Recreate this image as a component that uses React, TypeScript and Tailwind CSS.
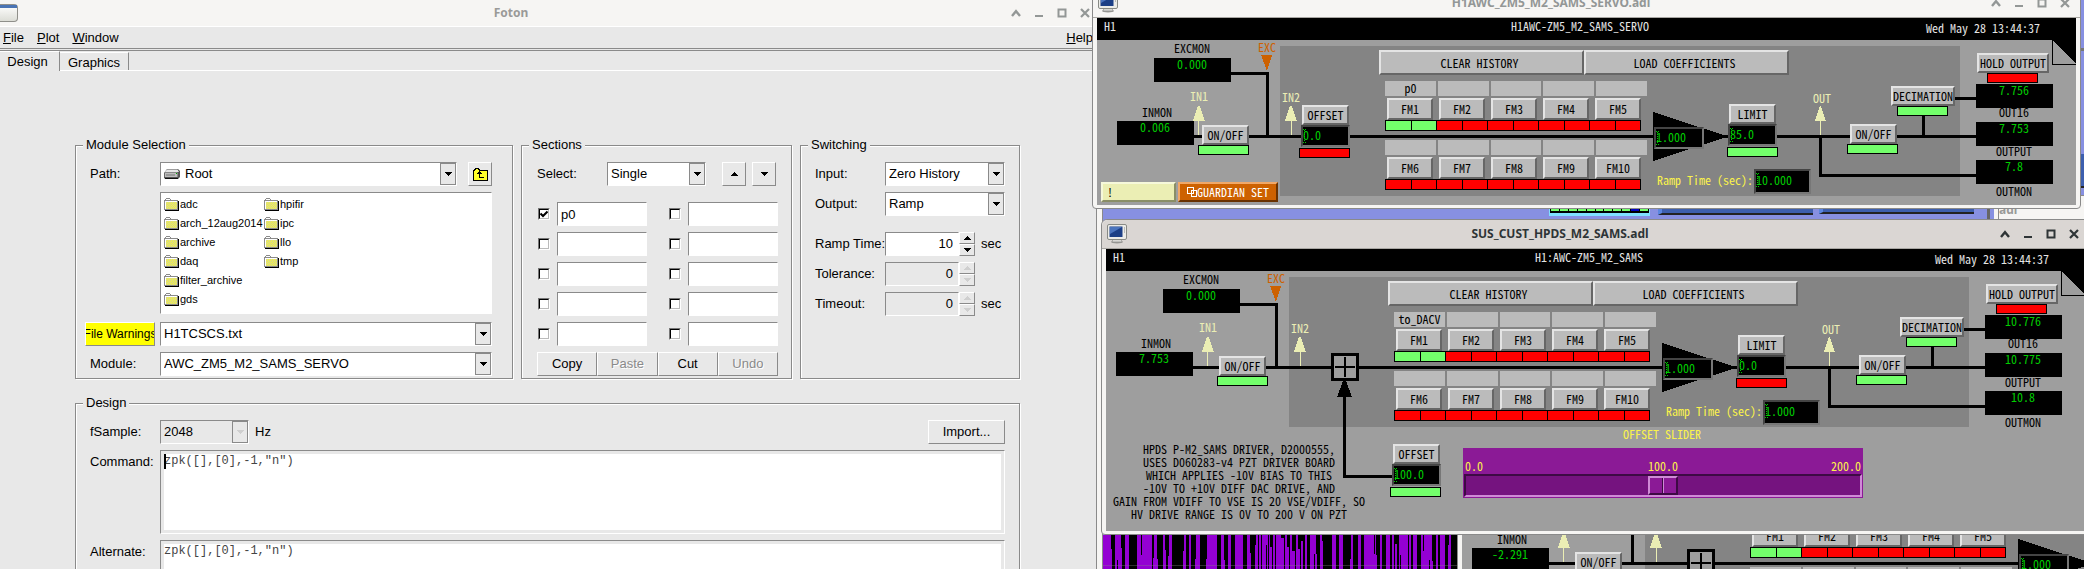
import type { ReactNode } from 'react';

/* ---------- shared pieces ---------- */

const SANS = "font-['Liberation_Sans',Arial,sans-serif]";
const MONO = "font-['Noto_Sans_Mono_CJK_SC','Liberation_Mono',monospace]";

function WindowControls() {
  const cls = 'flex h-4 w-[23px] items-center justify-center';
  return (
    <div className="flex shrink-0">
      <button className={cls} aria-label="Shade">
        <svg width="10" height="10" viewBox="0 0 10 10" fill="none" stroke="currentColor" strokeWidth="2.4"><path d="M1 8 5 3.2 9 8" /></svg>
      </button>
      <button className={cls} aria-label="Minimize">
        <svg width="10" height="10" viewBox="0 0 10 10" fill="currentColor"><path d="M1 7h8v2H1z" /></svg>
      </button>
      <button className={cls} aria-label="Maximize">
        <svg width="10" height="10" viewBox="0 0 10 10" fill="none" stroke="currentColor" strokeWidth="2"><path d="M1.500 1.500h7v7h-7z" /></svg>
      </button>
      <button className={cls} aria-label="Close">
        <svg width="10" height="10" viewBox="0 0 10 10" fill="none" stroke="currentColor" strokeWidth="2.2"><path d="M1 1 9 9M9 1 1 9" /></svg>
      </button>
    </div>
  );
}

function Triangle({ up = false, dim = false }: { up?: boolean; dim?: boolean }) {
  return (
    <svg width="8" height="4" viewBox="0 0 8 4" shapeRendering="crispEdges" fill={dim ? '#cfcfcf' : '#000'}>
      <path d={up ? 'M0 4 4 0 8 4z' : 'M0 0h8L4 4z'} />
    </svg>
  );
}

/* ---------- Foton form ---------- */

const SUNKEN = 'border border-t-[#8a8a8a] border-l-[#8a8a8a] border-r-white border-b-white';
const RAISED = 'border border-t-white border-l-white border-r-[#8a8a8a] border-b-[#8a8a8a]';

function Group({ title, className = '', bodyClass = '', children }: { title: string; className?: string; bodyClass?: string; children: ReactNode }) {
  return (
    <fieldset className={`min-w-0 border border-[#8a8a8a] shadow-[1px_1px_0_#fff,inset_1px_1px_0_#fff] ${className}`}>
      <legend className="ml-[7px] h-4 bg-[#e8e8e8] px-[3px] leading-4">{title}</legend>
      <div className={`pt-[9px] ${bodyClass}`}>{children}</div>
    </fieldset>
  );
}

function Combo({ id, value, disabled = false, className = '', icon }: { id: string; value: string; disabled?: boolean; className?: string; icon?: ReactNode }) {
  return (
    <div className={`relative h-6 ${className}`}>
      <select id={id} disabled={disabled} className={`h-6 w-full appearance-none rounded-none text-black opacity-100 ${SUNKEN} ${disabled ? 'bg-[#e8e8e8]' : 'bg-white'} ${icon ? 'pl-6' : 'pl-[3px]'}`}>
        <option>{value}</option>
      </select>
      {icon && <span className="pointer-events-none absolute top-[6px] left-1">{icon}</span>}
      <span className="pointer-events-none absolute top-px right-px flex h-[22px] w-4 items-center justify-center border border-[#8a8a8a] bg-[#e8e8e8]">
        <Triangle dim={disabled} />
      </span>
    </div>
  );
}

function Folder({ name }: { name: string }) {
  return (
    <li className="flex items-center gap-px text-[11px] leading-[19px]">
      <svg width="15" height="13" viewBox="0 0 15 13" shapeRendering="crispEdges" className="shrink-0">
        <path d="M1 2h1V1h4v1h1v1h8v10H1z" fill="#000" />
        <path d="M0 2h1V1h1V0h4v1h1v1h7v10H0z" fill="#8a8a8a" />
        <path d="M1 3h12v8H1z" fill="url(#folderDots)" />
        <path d="M1 3h12v1H1zM1 3h1v8H1zM2 1h4v1H2z" fill="#fff" />
      </svg>
      {name}
    </li>
  );
}

function Spin({ id, label, value, unit, disabled = false }: { id: string; label: string; value: string; unit?: string; disabled?: boolean }) {
  return (
    <>
      <label htmlFor={id} className="leading-6">{label}</label>
      <div className="flex h-6">
        <input id={id} defaultValue={value} disabled={disabled} className={`w-[74px] pr-[5px] text-right text-black ${SUNKEN} ${disabled ? 'bg-[#e8e8e8]' : 'bg-white'}`} />
        <span className="flex w-4 flex-col">
          <button disabled={disabled} aria-label={`Increase ${label}`} className={`flex h-3 items-center justify-center ${RAISED}`}><Triangle up dim={disabled} /></button>
          <button disabled={disabled} aria-label={`Decrease ${label}`} className={`flex h-3 items-center justify-center ${RAISED}`}><Triangle dim={disabled} /></button>
        </span>
        {unit && <span className="ml-[6px] leading-6">{unit}</span>}
      </div>
    </>
  );
}

function SectionCell({ n, name = '' }: { n: number; name?: string }) {
  return (
    <div className="flex items-center gap-[7px]">
      <span className="relative h-3 w-3 border border-t-[#777] border-l-[#777] border-r-white border-b-white">
        <input type="checkbox" defaultChecked={name !== ''} aria-label={`Section ${n}`} className="absolute inset-0 h-[10px] w-[10px] appearance-none border border-t-black border-l-black border-r-[#bbb] border-b-[#bbb] bg-white" />
        {name !== '' && (
          <svg className="pointer-events-none absolute top-[1px] left-[1px]" width="8" height="8" viewBox="0 0 8 8" fill="none" stroke="#000" strokeWidth="2"><path d="M0.500 3.500 3 6 7.500 1.500" /></svg>
        )}
      </span>
      <input aria-label={`Section ${n} name`} defaultValue={name} className={`h-6 w-[90px] bg-white px-[3px] ${SUNKEN}`} />
    </div>
  );
}

function Foton() {
  return (
    <main className={`flex min-w-0 flex-1 flex-col border-r border-[#8a8a8a] bg-[#e8e8e8] text-[13px] text-black ${SANS}`}>
      <svg width="0" height="0" className="absolute">
        <defs>
          <pattern id="folderDots" width="2" height="2" patternUnits="userSpaceOnUse">
            <rect width="2" height="2" fill="#ffff2a" />
            <rect width="1" height="1" fill="#c8c8b0" />
            <rect x="1" y="1" width="1" height="1" fill="#c8c8b0" />
          </pattern>
        </defs>
      </svg>
      <header className="flex h-[27px] shrink-0 items-center gap-1 border-b border-white bg-[#f6f5f3] text-[#939796]">
        <span className="h-[18px] w-[18px] rounded-r-sm border border-l-0 border-[#8f8f8a] bg-gradient-to-b from-white to-[#dcddd6]"><span className="block h-[3px] bg-[#4a74b4]" /></span>
        <h1 className="flex-1 text-center font-['Noto_Sans',sans-serif] text-[12px] leading-5 font-bold text-[#9a9a98]">Foton</h1>
        <WindowControls />
      </header>
      <nav className="flex h-[22px] shrink-0 items-center gap-[13px] border-b border-[#8a8a8a] px-[3px]">
        <a href="#file"><u>F</u>ile</a>
        <a href="#plot"><u>P</u>lot</a>
        <a href="#window"><u>W</u>indow</a>
        <a href="#help" className="ml-auto"><u>H</u>elp</a>
      </nav>
      <div className="mt-px flex h-[21px] shrink-0 items-end border-t border-[#8a8a8a]" role="tablist">
        <button role="tab" aria-selected="true" className="h-5 w-[60px] border-t border-r border-t-white border-r-[#8a8a8a] pr-1 leading-4">Design</button>
        <div className="flex h-5 flex-1 items-end border-b border-white">
          <button role="tab" aria-selected="false" className="h-[18px] w-[69px] border-t border-r border-t-white border-r-[#8a8a8a]">Graphics</button>
        </div>
      </div>

      <form className="flex flex-col gap-4 pt-[66px] pr-[76px] pl-[75px]" onSubmit={(e) => e.preventDefault()}>
        <div className="flex gap-2">
          <Group title="Module Selection" className="flex-1" bodyClass="pr-5 pb-[2px] pl-[9px]">
            <div className="grid grid-cols-[70px_1fr] gap-x-[5px] gap-y-[6px]">
              <label htmlFor="path" className="pl-[5px] leading-6">Path:</label>
              <div className="flex gap-[11px]">
                <Combo
                  id="path"
                  value="Root"
                  className="flex-1"
                  icon={
                    <svg width="16" height="12" viewBox="0 0 16 12">
                      <path d="M3 1h11l2 2v6l-2 2H1L0 9.500V5z" fill="#555" />
                      <path d="M3 1.500h10.500L15 4H0.800z" fill="#e6e6e6" />
                      <path d="M0.800 4.500H13.500V9H0.800z" fill="#bdbdbd" />
                      <path d="M2 7h9" stroke="#777" />
                      <path d="M12 5h1v1h-1z" fill="#0a0" />
                      <path d="M1 10.500h13" stroke="#111" />
                    </svg>
                  }
                />
                <button aria-label="Up one level" className={`flex h-6 w-6 items-center justify-center ${RAISED}`}>
                  <svg width="15" height="13" viewBox="0 0 15 13" shapeRendering="crispEdges">
                    <path d="M0 2h1V1h1V0h4v1h1v1h8v11H0z" fill="#000" />
                    <path d="M1 3h1V2h1V1h2v1h1v1h8v9H1z" fill="#ffff2a" />
                    <path d="M6 3h1v1h1v1h1v1H7v3h4v1H6V6H4V5h1V4h1z" fill="#000" />
                  </svg>
                </button>
              </div>
              <ul className={`col-start-2 mb-[2px] grid h-[122px] grid-flow-col grid-cols-[100px_1fr] grid-rows-[repeat(6,19px)] content-start bg-white pt-[2px] pl-[3px] ${SUNKEN}`}>
                {['adc', 'arch_12aug2014', 'archive', 'daq', 'filter_archive', 'gds', 'hpifir', 'ipc', 'llo', 'tmp'].map((f) => (
                  <Folder key={f} name={f} />
                ))}
              </ul>
              <button className={`flex h-6 items-center justify-center overflow-hidden bg-[#ffff00] text-[12px] whitespace-nowrap ${RAISED}`}>File Warnings</button>
              <Combo id="file" value="H1TCSCS.txt" />
              <label htmlFor="module" className="pl-[5px] leading-6">Module:</label>
              <Combo id="module" value="AWC_ZM5_M2_SAMS_SERVO" />
            </div>
          </Group>

          <Group title="Sections" className="w-[271px] shrink-0" bodyClass="pr-[13px] pl-[15px]">
            <div className="mb-4 flex">
              <label htmlFor="select" className="w-[70px] leading-6">Select:</label>
              <Combo id="select" value="Single" className="w-[99px]" />
              <button aria-label="Move up" className={`ml-4 flex h-6 w-6 items-center justify-center ${RAISED}`}><Triangle up /></button>
              <button aria-label="Move down" className={`ml-[6px] flex h-6 w-6 items-center justify-center ${RAISED}`}><Triangle /></button>
            </div>
            <div className="flex flex-col gap-[6px]">
              {[0, 1, 2, 3, 4].map((r) => (
                <div key={r} className="flex justify-between pl-px">
                  <SectionCell n={r * 2 + 1} name={r === 0 ? 'p0' : ''} />
                  <SectionCell n={r * 2 + 2} />
                </div>
              ))}
              <div className="grid grid-cols-4">
                <button className={`h-6 ${RAISED}`}>Copy</button>
                <button className={`h-6 text-[#8a8a8a] ${RAISED} [text-shadow:1px_1px_0_#fff]`}>Paste</button>
                <button className={`h-6 ${RAISED}`}>Cut</button>
                <button className={`h-6 text-[#8a8a8a] ${RAISED} [text-shadow:1px_1px_0_#fff]`}>Undo</button>
              </div>
            </div>
          </Group>

          <Group title="Switching" className="w-[220px] shrink-0" bodyClass="px-[14px]">
            <div className="grid grid-cols-[70px_1fr] gap-y-[6px]">
              <label htmlFor="input" className="leading-6">Input:</label>
              <Combo id="input" value="Zero History" />
              <label htmlFor="output" className="leading-6">Output:</label>
              <Combo id="output" value="Ramp" />
            </div>
            <div className="mt-4 grid grid-cols-[70px_1fr] gap-y-[6px] whitespace-nowrap">
              <Spin id="ramp" label="Ramp Time:" value="10" unit="sec" />
              <Spin id="tolerance" label="Tolerance:" value="0" disabled />
              <Spin id="timeout" label="Timeout:" value="0" unit="sec" disabled />
            </div>
          </Group>
        </div>

        <Group title="Design" bodyClass="px-[14px] pb-2">
          <div className="grid grid-cols-[70px_1fr] gap-y-[6px]">
            <label htmlFor="fsample" className="leading-6">fSample:</label>
            <div className="flex">
              <Combo id="fsample" value="2048" disabled className="w-[89px]" />
              <span className="ml-[6px] leading-6">Hz</span>
              <button className={`ml-auto h-6 w-[77px] ${RAISED}`}>Import...</button>
            </div>
            <label htmlFor="command" className="leading-6">Command:</label>
            <div className={`relative p-[3px] ${SUNKEN}`}>
              <textarea id="command" defaultValue={'zpk([],[0],-1,"n")'} className="block h-[76px] w-full resize-none bg-white font-['Liberation_Mono',monospace] text-[12px] leading-[15px] text-[#444]" />
              <span className="absolute top-[3px] left-[3px] h-[15px] w-[2px] bg-black" />
            </div>
            <label htmlFor="alternate" className="leading-6">Alternate:</label>
            <div className={`p-[3px] ${SUNKEN}`}>
              <textarea id="alternate" defaultValue={'zpk([],[0],-1,"n")'} className="block h-[76px] w-full resize-none bg-white font-['Liberation_Mono',monospace] text-[12px] leading-[15px] text-[#444]" />
            </div>
          </div>
        </Group>
      </form>
    </main>
  );
}

/* ---------- filter module screens ---------- */

const BEVEL = 'border-2 border-t-[#e4e4e4] border-l-[#e4e4e4] border-r-[#666] border-b-[#666] bg-[#bbb] text-black';

function Btn({ className, children }: { className: string; children: ReactNode }) {
  return <button className={`flex items-center justify-center overflow-hidden whitespace-nowrap ${BEVEL} ${className}`}>{children}</button>;
}

function Led({ on, className }: { on: boolean; className: string }) {
  return <span className={`absolute h-[10px] w-[51px] border border-black ${on ? 'bg-[#73ff6b]' : 'bg-[#ff0000]'} ${className}`} />;
}

function Tag({ className, children }: { className: string; children: ReactNode }) {
  return <span className={`absolute h-4 w-[100px] text-center leading-4 whitespace-nowrap ${className}`}>{children}</span>;
}

function Readout({ className, children }: { className: string; children: ReactNode }) {
  return <output className={`absolute h-6 w-[77px] bg-black pr-px text-center leading-3 text-[#00cd00] ${className}`}>{children}</output>;
}

function Entry({ label, value, className }: { label: string; value: string; className: string }) {
  return (
    <span className={`absolute ${className}`}>
      <input aria-label={label} defaultValue={value} className="block h-full w-full border-2 border-t-[#444] border-l-[#444] border-r-[#777] border-b-[#777] bg-black pb-1 leading-4 text-[#00cd00]" />
      <svg className="pointer-events-none absolute top-1 left-[2px]" width="3" height="14" viewBox="0 0 3 14" stroke="#00cd00" strokeDasharray="1 1" fill="none"><path d="M0 .5h3M1.500 1v12M0 13.500h3" /></svg>
    </span>
  );
}

function FilterBank({ first, label, on = false }: { first: number; label?: string; on?: boolean }) {
  return (
    <div className="w-[262px]">
      <div className="grid grid-cols-5 gap-[2px]">
        {[0, 1, 2, 3, 4].map((i) => (
          <span key={i} className="h-[15px] bg-[#bbb] text-center leading-[13px]">{i === 0 ? label : ''}</span>
        ))}
      </div>
      <div className="mt-[2px] flex gap-[6px] pl-[2px]">
        {[0, 1, 2, 3, 4].map((i) => (
          <Btn key={i} className="h-[22px] w-[46px]">{`FM${first + i}`}</Btn>
        ))}
      </div>
      <div className="grid h-[11px] w-[256px] grid-cols-10 border-y border-r border-black">
        {[0, 1, 2, 3, 4, 5, 6, 7, 8, 9].map((i) => (
          <span key={i} className={`border-l border-black ${on && i < 2 ? 'bg-[#73ff6b]' : 'bg-[#ff0000]'}`} />
        ))}
      </div>
    </div>
  );
}

type Bank = {
  channel: string;
  inmon: string;
  filter: string;
  offset: string;
  offsetOn: boolean;
  limit: string;
  limitOn: boolean;
  ramp: string;
  out: [string, string, string];
  summing: boolean;
};

function FilterScreen({ bank, className, children }: { bank: Bank; className: string; children?: ReactNode }) {
  const sum = bank.summing;
  return (
    <div className={`relative w-[979px] overflow-hidden bg-[#9e9e9e] text-[12px] text-black ${MONO} ${className}`}>
      <div className="grid h-[22px] grid-cols-[1fr_200px_1fr] bg-black pr-9 pl-[23px] leading-4 text-[#e4e4e4]">
        <span className="-ml-4">H1</span>
        <span className="text-center whitespace-nowrap">{bank.channel}</span>
        <time className="pt-[2px] text-right">Wed May 28 13:44:37</time>
      </div>
      <div className="absolute top-[28px] left-[183px] h-[150px] w-[680px] bg-[#848484]" />

      <svg className="absolute top-0 left-0" width="979" height="282" viewBox="0 0 979 282" shapeRendering="crispEdges">
        <g fill="none" stroke="#000" strokeWidth="3">
          <path d="M134 55.500h36.500V118" />
          <path d="M87 118.500h792M723.500 118v39.500H879M826.500 97v21M856 80.500h23" />
          {sum && <path d="M238.500 146v81.500H287" />}
        </g>
        <path d="M556 94v49L631 118.500z" />
        <path d="M164 37h11l-5 16z" fill="#cd6100" />
        <g fill="#ebeeb4">
          <path d="M96 103 101 88h2l5 15zM101 103h1v14h-1z" />
          <path d="M188 103 193 88h2l5 15zM194 103h1v14h-1z" />
          <path d="M718 103 723 88h1l5 15zM723 103h1v14h-1z" />
        </g>
        {sum && (
          <g>
            <path d="M231 148 237 132h3l6 16z" />
            <path d="M226.500 105.500h25v25h-25z" fill="#9e9e9e" stroke="#000" strokeWidth="3" />
            <path d="M229 117h20v2H229zM238 108h2v20h-2z" />
          </g>
        )}
        <path d="M956 22h23v24z" />
        <path d="M955.500 22v24.500H979" fill="none" stroke="#000" />
      </svg>

      <Tag className="top-[22px] left-[45px]">EXCMON</Tag>
      <Readout className="top-[40px] left-[57px]">0.000</Readout>
      <Tag className="top-[21px] left-[120px] text-[#cd6100]">EXC</Tag>
      <Tag className="top-[70px] left-[52px] text-[#ebeeb4]">IN1</Tag>
      <Tag className="top-[71px] left-[144px] text-[#ebeeb4]">IN2</Tag>
      <Tag className="top-[72px] left-[675px] text-[#ebeeb4]">OUT</Tag>

      <Tag className={sum ? 'top-[86px] left-0' : 'top-[86px] left-[10px]'}>INMON</Tag>
      <Readout className={sum ? 'top-[103px] left-[10px]' : 'top-[103px] left-[20px]'}>{bank.inmon}</Readout>
      <Btn className={sum ? 'absolute top-[107px] left-[113px] h-5 w-[47px]' : 'absolute top-[107px] left-[105px] h-5 w-[47px]'}>ON/OFF</Btn>
      <Led on className={sum ? 'top-[127px] left-[111px]' : 'top-[127px] left-[101px]'} />

      <Btn className={sum ? 'absolute top-[195px] left-[287px] h-5 w-[47px]' : 'absolute top-[87px] left-[205px] h-5 w-[47px]'}>OFFSET</Btn>
      <Entry label="Offset" value={bank.offset} className={sum ? 'top-[215px] left-[286px] h-[22px] w-[49px]' : 'top-[107px] left-[204px] h-[22px] w-[49px]'} />
      <Led on={bank.offsetOn} className={sum ? 'top-[238px] left-[284px]' : 'top-[130px] left-[202px]'} />

      <div className="absolute top-[32px] left-[282px] flex">
        <Btn className="h-[25px] w-[205px] pr-1">CLEAR HISTORY</Btn>
        <Btn className="h-[25px] w-[205px] pr-1">LOAD COEFFICIENTS</Btn>
      </div>
      <div className="absolute top-[63px] left-[288px] flex flex-col gap-[9px]">
        <FilterBank first={1} label={bank.filter} on />
        <FilterBank first={6} />
      </div>

      <Entry label="Gain" value="1.000" className="top-[109px] left-[557px] h-[22px] w-[50px]" />
      <Btn className="absolute top-[86px] left-[632px] h-5 w-[47px]">LIMIT</Btn>
      <Entry label="Limit" value={bank.limit} className="top-[106px] left-[631px] h-[22px] w-[49px]" />
      <Led on={bank.limitOn} className="top-[129px] left-[630px]" />
      <Tag className="top-[154px] left-[558px] text-[#fbf34a]">Ramp Time (sec):</Tag>
      <Entry label="Ramp time" value={bank.ramp} className="top-[151px] left-[657px] h-[25px] w-[57px]" />

      <Btn className="absolute top-[106px] left-[753px] h-5 w-[47px]">ON/OFF</Btn>
      <Led on className="top-[126px] left-[750px]" />
      <Btn className="absolute top-[68px] left-[794px] h-5 w-[64px]">DECIMATION</Btn>
      <Led on className="top-[88px] left-[800px]" />
      <Btn className="absolute top-[35px] left-[880px] h-5 w-[72px]">HOLD OUTPUT</Btn>
      <Led on={false} className="top-[55px] left-[890px]" />

      <Readout className="top-[66px] left-[879px]">{bank.out[0]}</Readout>
      <Tag className="top-[86px] left-[867px]">OUT16</Tag>
      <Readout className="top-[104px] left-[879px]">{bank.out[1]}</Readout>
      <Tag className="top-[125px] left-[867px]">OUTPUT</Tag>
      <Readout className="top-[142px] left-[879px]">{bank.out[2]}</Readout>
      <Tag className="top-[165px] left-[867px]">OUTMON</Tag>
      {children}
    </div>
  );
}

function ScreenWindow({ title, active = false, className, children }: { title: string; active?: boolean; className: string; children: ReactNode }) {
  return (
    <section className={`absolute w-[989px] rounded-t-md rounded-b-sm border border-[#8a8a8a] bg-[#f6f5f3] pb-[3px] ${className}`}>
      <header className={`flex h-[29px] items-center rounded-t-md border-b border-[#a8a6a2] pr-1 pl-[5px] ${active ? 'bg-[#dad6d3] text-[#2e3436]' : 'bg-[#f6f5f3] text-[#939796]'}`}>
        <svg width="20" height="20" viewBox="0 0 20 20">
          <ellipse cx="10" cy="18" rx="6" ry="1.500" fill="#9a9a96" />
          <path d="M6 15h8l1 3H5z" fill="#d8d8d4" stroke="#888" strokeWidth=".6" />
          <rect x=".5" y=".5" width="19" height="15" rx="1.500" fill="#ecece8" stroke="#888a85" />
          <rect x="2.500" y="2.500" width="13" height="10.500" fill="#1c3f86" />
          <path d="M3 3h12L3 10z" fill="#4b74bd" />
          <path d="M17 4h1M17 6h1M17 8h1" stroke="#888" />
        </svg>
        <h2 className="flex-1 text-center font-['Noto_Sans',sans-serif] text-[12px] leading-5 font-bold">{title}</h2>
        <WindowControls />
      </header>
      <div className="px-[4px]">{children}</div>
    </section>
  );
}

const servo: Bank = {
  channel: 'H1AWC-ZM5_M2_SAMS_SERVO', inmon: '0.006', filter: 'p0', offset: '0.0', offsetOn: false,
  limit: '85.0', limitOn: true, ramp: '10.000', out: ['7.756', '7.753', '7.8'], summing: false,
};
const sams: Bank = {
  channel: 'H1:AWC-ZM5_M2_SAMS', inmon: '7.753', filter: 'to_DACV', offset: '100.0', offsetOn: true,
  limit: '0.0', limitOn: false, ramp: '1.000', out: ['10.776', '10.775', '10.8'], summing: true,
};
const third: Bank = { ...sams, inmon: '-2.291' };

/* Burst plot: [start, end, height] of each violet bar, in thirds of a pixel */
const BURSTS = [
  [9, 33, 101], [33, 36, 58], [45, 63, 101], [62, 66, 62], [75, 87, 101], [111, 156, 101], [162, 171, 101], [171, 174, 30],
  [159, 162, 32], [189, 195, 101], [195, 198, 57], [207, 216, 101], [204, 207, 38], [252, 258, 101], [249, 252, 54], [267, 273, 101],
  [288, 300, 101], [285, 288, 30], [321, 351, 101], [318, 321, 30], [363, 372, 101], [372, 375, 27], [384, 393, 101],
  [405, 429, 101], [441, 450, 101], [450, 453, 48], [468, 474, 101], [465, 468, 72], [477, 482, 101], [486, 504, 101],
  [507, 510, 101], [510, 515, 66], [519, 525, 101], [528, 543, 101], [543, 552, 91], [555, 561, 101], [561, 567, 66],
  [570, 576, 101], [576, 585, 52], [588, 594, 101], [594, 600, 60], [603, 609, 82], [615, 621, 101], [630, 648, 101],
  [648, 651, 45], [660, 666, 101], [666, 669, 84], [696, 708, 101], [717, 729, 101], [753, 759, 101], [750, 753, 30],
  [774, 783, 101], [792, 828, 101], [828, 831, 42], [840, 846, 101], [858, 870, 101], [876, 882, 101], [885, 891, 75],
  [897, 924, 101], [927, 932, 101], [939, 951, 101], [963, 969, 101], [969, 996, 101], [996, 999, 24], [1008, 1014, 101],
  [1020, 1035, 101], [1047, 1053, 101], [1044, 1047, 72],
];

function BurstPlot() {
  return (
    <svg className="absolute top-[535px] left-[6px]" width="355" height="34" viewBox="9 0 1065 101" preserveAspectRatio="none" shapeRendering="crispEdges">
      <rect x="0" width="1074" height="101" />
      {BURSTS.map(([a, b, h]) => (
        <rect key={a} x={a} y={101 - h} width={b - a} height={h} fill="#9400d3" />
      ))}
      <g fill="#000">
        <path d="M51 75h3v26h-3zM123 0h3v60h-3zM822 0h3v55h-3zM900 60h3v41h-3zM969 0h3v48h-3zM987 75h3v26h-3zM498 30h3v71h-3zM642 55h3v46h-3z" />
      </g>
      <path d="M9 90h1065" stroke="#888" strokeOpacity=".35" strokeWidth="3" />
    </svg>
  );
}

function Desktop() {
  return (
    <aside className="relative w-[987px] shrink-0 bg-[#8790e1]">
      <div className="absolute inset-y-0 left-0 w-[6px] border-r border-[#8a8a8a] bg-[#f6f5f3]" />
      <div className="absolute top-[48px] right-0 h-[3px] w-1 bg-[#777]" />
      <div className="absolute top-[154px] right-0 h-[34px] w-1 border-b-2 border-[#222] bg-[#3d5fae]" />
      <div className="absolute top-[200px] left-[452px] h-[16px] w-[101px] bg-[#7fe0ff] px-px">
        <div className="grid h-[13px] grid-cols-11 border-r border-b border-black bg-black">
          {[0, 1, 2, 3, 4, 5, 6, 7, 8, 9, 10].map((i) => (
            <span key={i} className={`border-b border-l border-black ${i === 9 ? 'bg-[#0000c0]' : 'bg-[#73ff6b]'}`} />
          ))}
        </div>
      </div>
      <div className="absolute top-[196px] left-[561px] h-[19px] w-[155px] border-b-2 border-l-4 border-b-[#222] border-l-[#5a86e0] bg-[#3d5fae]" />
      <div className="absolute top-[195px] left-[722px] h-[19px] w-[155px] border-b-2 border-l-4 border-b-[#222] border-l-[#5a86e0] bg-[#3d5fae]" />
      <div className="absolute top-[195px] left-[890px] h-6 w-[3px] bg-[#666]" />
      <div className="absolute top-[195px] right-0 h-6 w-[90px] border-t border-[#8a8a8a] bg-[#f6f5f3] pl-[4px] font-['Noto_Sans',sans-serif] text-[12px] leading-7 font-bold text-[#9a9a98]">
        <div className="border-l border-[#8a8a8a]">adl</div>
      </div>

      <BurstPlot />
      <ScreenWindow title="SUS_CUST_HPDS_M3_SAMS.adl" className="top-[415px] left-[360px]">
        <FilterScreen bank={third} className="h-[282px]" />
      </ScreenWindow>

      <ScreenWindow title="SUS_CUST_HPDS_M2_SAMS.adl" active className="top-[219px] left-[4px]">
        <FilterScreen bank={sams} className="h-[282px]">
          <p className="absolute top-[193px] left-[3px] w-[260px] text-center leading-[13px]">
            HPDS P-M2_SAMS DRIVER, D2000555,<br />USES D060283-v4 PZT DRIVER BOARD<br />WHICH APPLIES -10V BIAS TO THIS<br />-10V TO +10V DIFF DAC DRIVE, AND<br />GAIN FROM VDIFF TO VSE IS 20 VSE/VDIFF, SO<br />HV DRIVE RANGE IS 0V TO 200 V ON PZT
          </p>
          <label htmlFor="offset-slider" className="absolute top-[177px] left-[506px] w-[100px] text-center leading-4 text-[#fbf34a]">OFFSET SLIDER</label>
          <div className="absolute top-[199px] left-[357px] flex h-[50px] w-[400px] flex-col bg-[#8b1a96] px-px pt-[11px] text-[#fbf34a]">
            <div className="flex h-[15px] justify-between px-px leading-[13px]"><span>0.0</span><span className="pl-3">100.0</span><span>200.0</span></div>
            <input
              id="offset-slider"
              type="range"
              min="0"
              max="200"
              defaultValue="100"
              className="block h-[23px] w-full appearance-none border-2 border-t-[#3d0a44] border-l-[#3d0a44] border-r-[#cf8ad6] border-b-[#cf8ad6] bg-[#75137f] [&::-webkit-slider-thumb]:h-[19px] [&::-webkit-slider-thumb]:w-[30px] [&::-webkit-slider-thumb]:appearance-none [&::-webkit-slider-thumb]:border-2 [&::-webkit-slider-thumb]:border-t-[#cf8ad6] [&::-webkit-slider-thumb]:border-r-[#3d0a44] [&::-webkit-slider-thumb]:border-b-[#3d0a44] [&::-webkit-slider-thumb]:border-l-[#cf8ad6] [&::-webkit-slider-thumb]:bg-[linear-gradient(90deg,#8b1a96_12px,#3d0a44_12px,#3d0a44_13px,#cf8ad6_13px,#cf8ad6_14px,#8b1a96_14px)]"
            />
          </div>
        </FilterScreen>
      </ScreenWindow>

      <ScreenWindow title="H1AWC_ZM5_M2_SAMS_SERVO.adl" className="top-[-12px] left-[-5px]">
        <FilterScreen bank={servo} className="h-[187px]">
          <button className="absolute top-[164px] left-[4px] h-5 w-[75px] border-2 border-t-[#f6f8da] border-r-[#8a8e66] border-b-[#8a8e66] border-l-[#f6f8da] bg-[#ebeeb4] pl-1 text-left leading-4">!</button>
          <button className="absolute top-[164px] left-[81px] flex h-5 w-[100px] items-center justify-center border-2 border-t-[#f0a868] border-r-[#6a3200] border-b-[#6a3200] border-l-[#f0a868] bg-[#cd6100] whitespace-nowrap text-white">
            <svg width="10" height="10" viewBox="0 0 10 10" fill="none" stroke="#fff" shapeRendering="crispEdges"><path d="M.5 .5h6v6h-6zM4.500 3.500h5v6h-5z" /></svg>
            GUARDIAN SET
          </button>
        </FilterScreen>
      </ScreenWindow>
    </aside>
  );
}

export default function App() {
  return (
    <div className="flex h-screen overflow-hidden">
      <Foton />
      <Desktop />
    </div>
  );
}
